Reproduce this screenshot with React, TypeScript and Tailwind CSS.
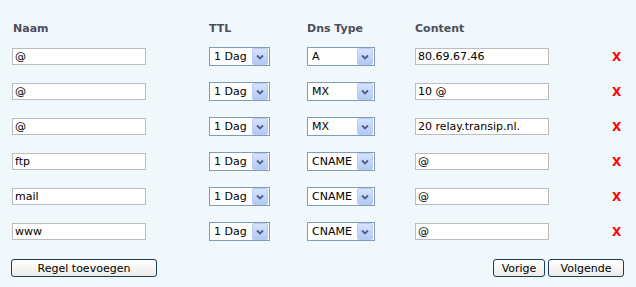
const rows = [
  { naam: "@", type: "A", content: "80.69.67.46" },
  { naam: "@", type: "MX", content: "10 @" },
  { naam: "@", type: "MX", content: "20 relay.transip.nl." },
  { naam: "ftp", type: "CNAME", content: "@" },
  { naam: "mail", type: "CNAME", content: "@" },
  { naam: "www", type: "CNAME", content: "@" },
];

function FakeSelect({ value, width }: { value: string; width: string }) {
  return (
    <div className={`flex h-[19px] ${width} items-center border border-[#7f9db9] bg-white`}>
      <span className="flex-1 pl-[4px] text-[11px] leading-none text-black">{value}</span>
      <span className="mr-px flex h-[17px] w-[16px] items-center justify-center rounded-[2px] border border-[#b9cbef] bg-gradient-to-b from-[#d7e3fd] to-[#b3c8f5]">
        <svg width="8" height="6" viewBox="0 0 8 6">
          <path d="M1 1.5 L4 4.5 L7 1.5" fill="none" stroke="#4d6185" strokeWidth="1.8" />
        </svg>
      </span>
    </div>
  );
}

function TextBox({ value }: { value: string }) {
  return (
    <div className="flex h-[17px] w-[134px] items-center border border-[#bcbcbc] bg-white pl-[2px] text-[11px] leading-none text-black">
      {value}
    </div>
  );
}

function Button({ children, className }: { children: string; className: string }) {
  return (
    <button
      className={`h-[18px] rounded-[3px] border border-[#1c3a64] bg-gradient-to-b from-white to-[#ecebe6] text-[11px] leading-none text-black ${className}`}
    >
      {children}
    </button>
  );
}

export default function App() {
  return (
    <div className="h-[287px] w-[636px] bg-[#f1f8fc] pl-[12px] pt-[22px] font-['DejaVu_Sans',Verdana,sans-serif]">
      <div className="flex h-[17px] text-[11px] font-bold leading-[13px] text-[#4d4e5a]">
        <div className="w-[197px] pl-px">Naam</div>
        <div className="w-[98px]">TTL</div>
        <div className="w-[108px]">Dns Type</div>
        <div className="w-[197px]">Content</div>
      </div>

      {rows.map((r, i) => (
        <div className="flex h-[35px] items-center" key={i}>
          <div className="w-[197px]">
            <TextBox value={r.naam} />
          </div>
          <div className="w-[98px]">
            <FakeSelect value="1 Dag" width="w-[61px]" />
          </div>
          <div className="w-[108px]">
            <FakeSelect value={r.type} width="w-[68px]" />
          </div>
          <div className="w-[197px]">
            <TextBox value={r.content} />
          </div>
          <span className="text-[12px] font-bold leading-none text-[#ff0000]">X</span>
        </div>
      ))}

      <div className="mt-[10px] flex items-center pr-[12px]">
        <Button className="ml-[-1px] w-[146px]">Regel toevoegen</Button>
        <div className="ml-auto flex gap-[3px]">
          <Button className="w-[52px]">Vorige</Button>
          <Button className="w-[76px]">Volgende</Button>
        </div>
      </div>
    </div>
  );
}
